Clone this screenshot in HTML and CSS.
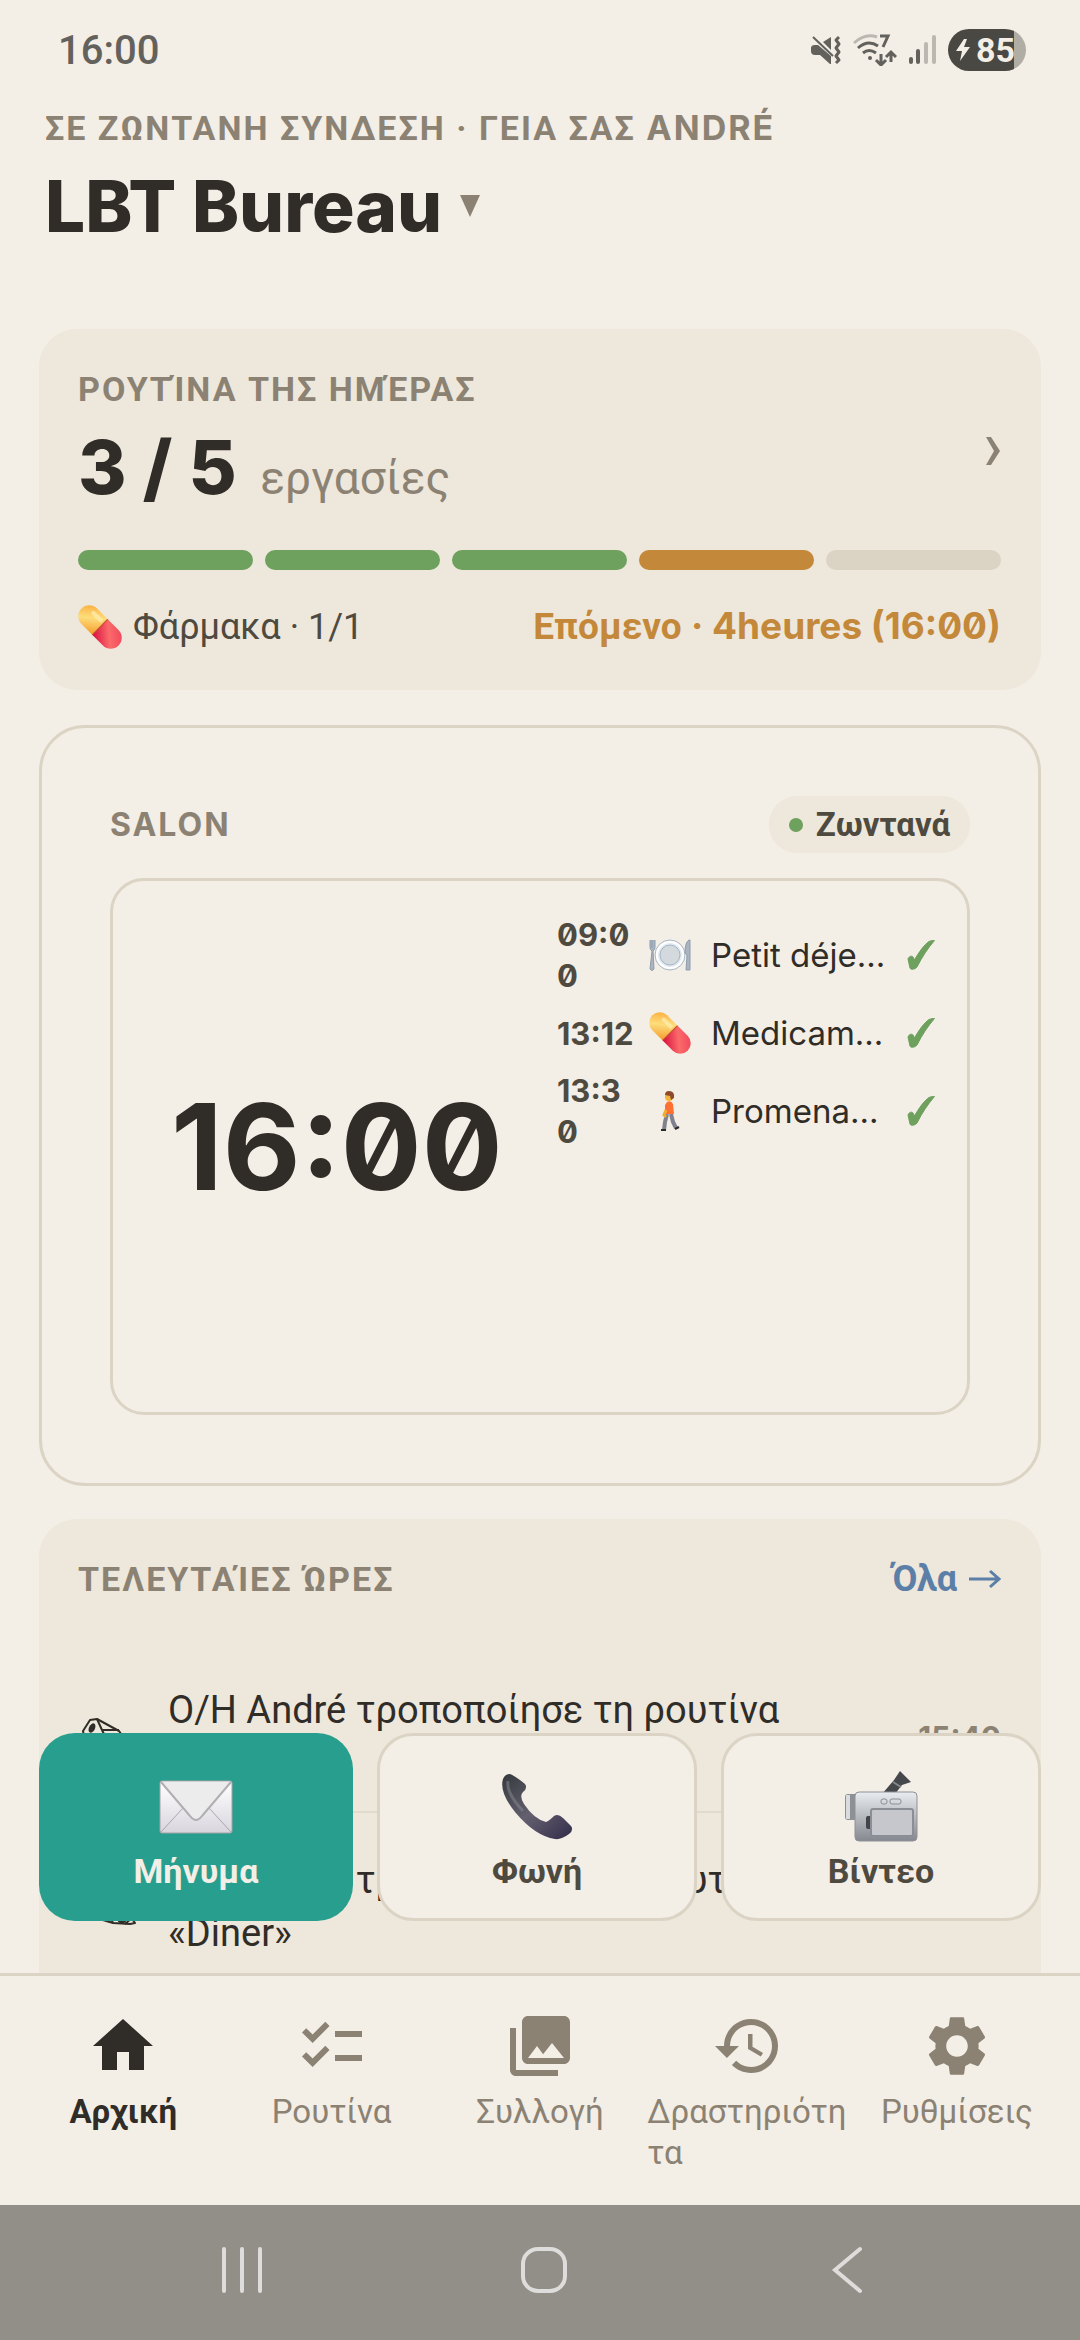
FILE: index.html
```html
<!DOCTYPE html>
<html lang="el">
<head>
    <meta charset="UTF-8">
    <meta name="viewport" content="width=device-width, initial-scale=1.0">
    <title>LBT Bureau</title>
    <link rel="stylesheet" href="styles.css">
</head>
<body>

    <!-- Shared drawings -->
    <svg class="sprite" aria-hidden="true">
        <defs>
            <linearGradient id="pillTop" x1="0" y1="0" x2="1" y2="1">
                <stop offset="0" stop-color="#fba32f"/>
                <stop offset=".5" stop-color="#fddd7c"/>
                <stop offset="1" stop-color="#f59a2c"/>
            </linearGradient>
            <linearGradient id="pillBottom" x1="0" y1="1" x2="1" y2="0">
                <stop offset="0" stop-color="#d80d3c"/>
                <stop offset=".5" stop-color="#fb6a6a"/>
                <stop offset="1" stop-color="#ee3f57"/>
            </linearGradient>
            <linearGradient id="silver" x1="0" y1="0" x2="0" y2="1">
                <stop offset="0" stop-color="#e9edf0"/>
                <stop offset="1" stop-color="#85888f"/>
            </linearGradient>
            <linearGradient id="paper" x1="0" y1="0" x2="0" y2="1">
                <stop offset="0" stop-color="#ffffff"/>
                <stop offset="1" stop-color="#d9d5de"/>
            </linearGradient>
            <linearGradient id="handset" x1="0" y1="0" x2="1" y2="1">
                <stop offset="0" stop-color="#34393d"/>
                <stop offset=".5" stop-color="#64606f"/>
                <stop offset="1" stop-color="#332c4a"/>
            </linearGradient>
            <symbol id="pill" viewBox="0 0 42 42">
                <g transform="rotate(45 21 21)">
                    <path d="M21 10.500V31.500H6.500A10.500 10.500 0 0 1 6.500 10.500Z" fill="url(#pillTop)"/>
                    <path d="M21 10.500V31.500H35.500A10.500 10.500 0 0 0 35.500 10.500Z" fill="url(#pillBottom)"/>
                    <path d="M21 10.500V31.500" stroke="#c4502b" stroke-width="1"/>
                    <path d="M7 16H17" stroke="#ffeeb0" stroke-width="4" stroke-linecap="round" opacity=".7"/>
                </g>
            </symbol>
            <symbol id="check" viewBox="0 0 28 30">
                <path d="M1 19C2 16 5 15.500 6 17L7.500 20C12 12 17 5 22 1.500C24 .5 26 .5 27.500 .5C21 8 15 17 10 27C8 29.500 3.500 30 3 28Z" fill="#6ea05e" stroke="#6ea05e"/>
            </symbol>
            <symbol id="note" viewBox="0 0 54 38">
                <path d="M1 13L8 2L15 1L37 13L53 35L48 36L31 35L4 27Z" fill="none" stroke="#302c27" stroke-width="2" stroke-linejoin="round"/>
                <path d="M15 1L20 12L31 35M20 12H37M43 36L50 30" fill="none" stroke="#302c27" stroke-width="2"/>
                <ellipse cx="10" cy="10" rx="3" ry="5" transform="rotate(25 10 10)" fill="#302c27"/>
                <ellipse cx="40" cy="33" rx="4" ry="2" fill="#302c27"/>
            </symbol>
        </defs>
    </svg>

    <div class="status-bar">
        <span class="clock">16:00</span>
        <div class="status-icons">
            <svg width="30" height="30" viewBox="0 0 30 30">
                <path d="M4 10H7L20 21V29H19L9 20H4Q0 20 0 16V13Q0 10 4 10ZM20 2V15L12 7Z" fill="#63615c"/>
                <path d="M2 2L22 21" stroke="#63615c" stroke-width="2"/>
                <path d="M28 2L25 5L28 9L25 13L28 17L25 21L28 25L25 28" fill="none" stroke="#63615c" stroke-width="3" stroke-linejoin="round"/>
            </svg>
            <svg width="44" height="32" viewBox="0 0 44 32">
                <g fill="none" stroke="#63615c" stroke-width="3">
                    <path d="M1 9Q12 -1 24 3" stroke="#bcb8b1"/>
                    <path d="M5 14Q15 5 25 12M10 19Q16 14 23 19"/>
                    <path d="M27 2H35L30 13"/>
                    <path d="M28 20V30M23 26L28 31L33 26M38 28V18M33 23L38 18L43 23"/>
                </g>
                <circle cx="17" cy="24" r="2" fill="#63615c"/>
            </svg>
            <svg width="27" height="30" viewBox="0 0 27 30">
                <path d="M2 24V27M9 16V27" stroke="#63615c" stroke-width="4" stroke-linecap="round"/>
                <path d="M17 9V27M25 2V27" stroke="#bcb8b1" stroke-width="4" stroke-linecap="round"/>
            </svg>
            <div class="battery">
                <svg width="14" height="22" viewBox="0 0 14 22"><path d="M8 0L0 12H6L4 22L14 8H8L11 0Z" fill="#f3eee6"/></svg>
                <span>85</span>
            </div>
        </div>
    </div>

    <main class="content">
        <header class="page-header">
            <p class="overline">ΣΕ ΖΩΝΤΑΝΗ ΣΥΝΔΕΣΗ · ΓΕΙΑ ΣΑΣ <span class="latin">ANDRÉ</span></p>
            <button class="home-picker">LBT Bureau
                <svg width="20" height="22" viewBox="0 0 20 22"><path d="M0 0H20L10 22Z" fill="#8b8273"/></svg>
            </button>
        </header>

        <section class="card routine">
            <div class="routine-top">
                <div>
                    <h2 class="overline">ΡΟΥΤΊΝΑ ΤΗΣ ΗΜΈΡΑΣ</h2>
                    <p class="count"><strong>3 / 5</strong> <span>εργασίες</span></p>
                </div>
                <svg class="chevron" width="16" height="28" viewBox="0 0 16 28"><path d="M1 0H6L15 14L6 28H1L9 14Z" fill="#8b8273"/></svg>
            </div>
            <div class="progress">
                <span class="done"></span>
                <span class="done"></span>
                <span class="done"></span>
                <span class="next"></span>
                <span></span>
            </div>
            <div class="routine-foot">
                <p class="meds"><svg width="44" height="44"><use href="#pill"/></svg>Φάρμακα · 1/1</p>
                <p class="upcoming">Επόμενο <span class="latin">· 4heures (16:00)</span></p>
            </div>
        </section>

        <section class="card room">
            <div class="room-head">
                <h2 class="overline latin">SALON</h2>
                <span class="live">Ζωντανά</span>
            </div>
            <div class="screen">
                <div class="big-clock">16:00</div>
                <ul class="tasks">
                    <li>
                        <span class="time">09:00</span>
                        <svg width="42" height="42" viewBox="0 0 42 42">
                            <circle cx="21" cy="21" r="15" fill="#e4eaf1" stroke="#aeb9c6"/>
                            <circle cx="21" cy="21" r="10" fill="#d3d9dd" stroke="#a6b4c4"/>
                            <circle cx="21" cy="21" r="13" fill="none" stroke="#ffffff" stroke-width="2"/>
                            <path d="M1 6V13Q1 16 3 17L1 35Q3 38 5 35L4 17Q6 16 6 13V6M3 6V14" fill="#a9b4c0" stroke="#8f9dad"/>
                            <path d="M40 6Q36 8 36 19L38 21L37 36H41V6Z" fill="#a9b4c0" stroke="#8f9dad"/>
                        </svg>
                        <span class="name">Petit déjeuner</span>
                        <svg width="28" height="30"><use href="#check"/></svg>
                    </li>
                    <li>
                        <span class="time">13:12</span>
                        <svg width="42" height="42"><use href="#pill"/></svg>
                        <span class="name">Medicaments</span>
                        <svg width="28" height="30"><use href="#check"/></svg>
                    </li>
                    <li>
                        <span class="time">13:30</span>
                        <svg width="42" height="42" viewBox="0 0 42 42">
                            <path d="M18 24L16 32L15 40M22 24L24 32L27 38" fill="none" stroke="#80818f" stroke-width="4"/>
                            <path d="M12 40H17M26 39L30 37" stroke="#292929" stroke-width="2"/>
                            <path d="M18 12Q22 10 24 14L25 24H16V15Z" fill="#ff7132"/>
                            <path d="M17 20L15 25L17 27" fill="none" stroke="#f3ad2c" stroke-width="3"/>
                            <circle cx="20" cy="7" r="4" fill="#f5b53a"/>
                            <path d="M16 5Q16 1 20 1Q26 1 25 8L22 10L21 6Z" fill="#8d4b2b"/>
                        </svg>
                        <span class="name">Promenade du soir</span>
                        <svg width="28" height="30"><use href="#check"/></svg>
                    </li>
                </ul>
            </div>
        </section>

        <section class="card activity">
            <div class="activity-head">
                <h2 class="overline">ΤΕΛΕΥΤΑΊΕΣ ΏΡΕΣ</h2>
                <a href="#">Όλα <svg width="32" height="20" viewBox="0 0 32 20"><path d="M0 10H29M21 2L30 10L21 18" fill="none" stroke="#5c7fa8" stroke-width="3"/></svg></a>
            </div>
            <ul class="events">
                <li>
                    <svg width="54" height="38"><use href="#note"/></svg>
                    <p>Ο/Η André τροποποίησε τη ρουτίνα «4heures»</p>
                    <time>15:40</time>
                </li>
                <li>
                    <svg width="54" height="38"><use href="#note"/></svg>
                    <p>Ο/Η André τροποποίησε τη ρουτίνα «Diner»</p>
                    <time>15:40</time>
                </li>
            </ul>
        </section>

        <div class="quick-actions">
            <button class="action primary">
                <svg width="74" height="74" viewBox="0 0 74 74">
                    <rect x="1" y="11" width="72" height="52" rx="2" fill="url(#paper)" stroke="#a5a0a6"/>
                    <path d="M2 62L24 38M72 62L50 38" stroke="#aaa6ad"/>
                    <path d="M2 12L31 46Q37 54 43 46L72 12" fill="#ececed" stroke="#b2afb4" stroke-width="2"/>
                </svg>
                Μήνυμα
            </button>
            <button class="action">
                <svg width="74" height="74" viewBox="0 0 74 74">
                    <path d="M3 9Q5 4 10 4Q14 5 25 14Q28 18 23 22Q19 26 24 34Q34 49 46 52Q49 51 54 46Q58 43 63 48L71 56Q74 60 69 64Q61 70 55 69Q35 66 15 42Q-1 22 3 9Z" fill="url(#handset)"/>
                    <path d="M8 11Q6 23 23 41" fill="none" stroke="#8a8992" stroke-width="3" opacity=".5"/>
                </svg>
                Φωνή
            </button>
            <button class="action">
                <svg width="74" height="74" viewBox="0 0 74 74">
                    <path d="M38 24L50 10L56 1L67 12L58 15L51 24Z" fill="#45484b"/>
                    <path d="M49 12L57 17" stroke="#86898c" stroke-width="2"/>
                    <rect x="1" y="24" width="13" height="26" rx="3" fill="#8d9095"/>
                    <rect x="2" y="25" width="4" height="24" fill="#d9dcdf"/>
                    <rect x="11" y="22" width="62" height="49" rx="4" fill="url(#silver)" stroke="#8e9298"/>
                    <rect x="22" y="46" width="6" height="13" rx="2" fill="#41444b"/>
                    <rect x="27" y="39" width="42" height="27" rx="2" fill="#c5c7cc" stroke="#8b8e95" stroke-width="2"/>
                    <rect x="37" y="29" width="6" height="5" rx="2" fill="none" stroke="#8b8e95"/>
                    <rect x="46" y="29" width="11" height="5" rx="2" fill="none" stroke="#8b8e95"/>
                </svg>
                Βίντεο
            </button>
        </div>
    </main>

    <nav class="tab-bar">
        <a href="#" class="tab active">
            <svg viewBox="0 0 24 24"><path d="M10 20v-6h4v6h5v-8h3L12 3 2 12h3v8z"/></svg>
            <span>Αρχική</span>
        </a>
        <a href="#" class="tab">
            <svg viewBox="0 0 24 24"><path d="M22 7h-9v2h9V7zm0 8h-9v2h9v-2zM5.540 11L2 7.460l1.410-1.410 2.120 2.120 4.240-4.240 1.410 1.410L5.540 11zm0 8L2 15.460l1.410-1.410 2.120 2.120 4.240-4.240 1.410 1.410L5.540 19z"/></svg>
            <span>Ρουτίνα</span>
        </a>
        <a href="#" class="tab">
            <svg viewBox="0 0 24 24"><path d="M22 16V4c0-1.100-.9-2-2-2H8c-1.100 0-2 .9-2 2v12c0 1.100.9 2 2 2h12c1.100 0 2-.9 2-2zm-11-4l2.030 2.710L16 11l4 5H8l3-4zM2 6v14c0 1.100.9 2 2 2h14v-2H4V6H2z"/></svg>
            <span>Συλλογή</span>
        </a>
        <a href="#" class="tab">
            <svg viewBox="0 0 24 24"><path d="M13 3c-4.970 0-9 4.030-9 9H1l3.890 3.890.07.14L9 12H6c0-3.870 3.130-7 7-7s7 3.130 7 7-3.130 7-7 7c-1.930 0-3.680-.79-4.940-2.060l-1.420 1.420C8.270 19.990 10.510 21 13 21c4.970 0 9-4.030 9-9s-4.030-9-9-9zm-1 5v5l4.280 2.540.72-1.210-3.500-2.080V8H12z"/></svg>
            <span>Δραστηριότητα</span>
        </a>
        <a href="#" class="tab">
            <svg viewBox="0 0 24 24"><path d="M19.140 12.940c.04-.3.06-.61.06-.94 0-.32-.02-.64-.07-.94l2.030-1.580c.18-.14.23-.41.12-.61l-1.920-3.320c-.12-.22-.37-.29-.59-.22l-2.390.96c-.5-.38-1.030-.7-1.620-.94l-.36-2.540c-.04-.24-.24-.41-.48-.41h-3.840c-.24 0-.43.17-.47.41l-.36 2.540c-.59.24-1.130.57-1.620.94l-2.390-.96c-.22-.08-.47 0-.59.22L2.740 8.870c-.12.21-.08.47.12.61l2.030 1.580c-.05.3-.09.63-.09.94s.02.64.07.94l-2.030 1.580c-.18.14-.23.41-.12.61l1.920 3.320c.12.22.37.29.59.22l2.390-.96c.5.38 1.030.7 1.620.94l.36 2.540c.05.24.24.41.48.41h3.840c.24 0 .44-.17.47-.41l.36-2.540c.59-.24 1.130-.56 1.620-.94l2.390.96c.22.08.47 0 .59-.22l1.920-3.320c.12-.22.07-.47-.12-.61l-2.010-1.580zM12 15.600c-1.980 0-3.600-1.620-3.600-3.600s1.620-3.600 3.600-3.600 3.600 1.620 3.600 3.600-1.620 3.600-3.600 3.600z"/></svg>
            <span>Ρυθμίσεις</span>
        </a>
    </nav>

    <div class="system-bar">
        <button aria-label="Recents"><svg width="48" height="48" viewBox="0 0 48 48"><path d="M5 3V45M23 3V45M41 3V45"/></svg></button>
        <button aria-label="Home"><svg width="48" height="48" viewBox="0 0 48 48"><rect x="3" y="3" width="42" height="42" rx="15"/></svg></button>
        <button aria-label="Back"><svg width="48" height="48" viewBox="0 0 48 48"><path d="M39 3L14 24L39 45"/></svg></button>
    </div>

</body>
</html>
```
FILE: styles.css
```css
/* --- Base and Theme Setup --- */
:root {
    --bg: #f3eee6;
    --card: #eee7db;
    --line: #dbd4c5;
    --ink: #302c27;
    --ink-soft: #4f4a3f;
    --muted: #8b8273;
    --green: #6ea05e;
    --amber: #c38839;
    --blue: #5c7fa8;
    --teal: #289f8e;
}

* {
    box-sizing: border-box;
}

body {
    margin: 0;
    height: 100vh;
    display: flex;
    flex-direction: column;
    overflow: hidden;
    background: var(--bg);
    color: var(--ink);
    font-family: Roboto, "Noto Sans", sans-serif;
    font-size: 36px;
}

h2, p, ul {
    margin: 0;
    padding: 0;
    font-weight: 400;
}

ul {
    list-style: none;
}

button {
    border: none;
    background: none;
    padding: 0;
    font: inherit;
    color: inherit;
}

a {
    color: inherit;
    text-decoration: none;
}

svg {
    flex: none;
}

.sprite {
    position: absolute;
    width: 0;
    height: 0;
}

.latin {
    font-family: Inter, "Open Sans", sans-serif;
    font-feature-settings: "zero";
}

.overline {
    font-size: 34px;
    line-height: 44px;
    font-weight: 700;
    letter-spacing: 2px;
    color: var(--muted);
}

/* --- Status Bar --- */
.status-bar {
    display: flex;
    justify-content: space-between;
    align-items: center;
    height: 100px;
    padding: 0 54px 0 58px;
}

.clock {
    font-size: 40px;
    font-weight: 500;
    color: #63615c;
}

.status-icons {
    display: flex;
    align-items: center;
    gap: 12px;
}

.battery {
    display: flex;
    align-items: center;
    gap: 6px;
    width: 78px;
    height: 42px;
    padding-left: 8px;
    border-radius: 21px;
    background: linear-gradient(90deg, #494842 66px, #b0ada5 66px);
    color: var(--bg);
    font-size: 34px;
    font-weight: 700;
}

/* --- Content --- */
.content {
    position: relative;
    flex: 1;
    min-height: 0;
    overflow: hidden;
    padding: 0 39px;
}

.page-header {
    padding: 6px 6px 0;
    height: 229px;
}

.home-picker {
    display: flex;
    align-items: center;
    gap: 18px;
    margin-top: 8px;
    font-family: Inter, sans-serif;
    font-size: 71px;
    line-height: 96px;
    font-weight: 800;
}

.card {
    border-radius: 38px;
    background: var(--card);
    padding: 38px 40px 38px 39px;
}

/* --- Routine --- */
.routine {
    height: 361px;
}

.routine-top {
    display: flex;
    justify-content: space-between;
}

.chevron {
    margin-top: 70px;
}

.count {
    margin-top: 14px;
    line-height: 84px;
    font-size: 46px;
    color: var(--muted);
}

.count strong {
    margin-right: 12px;
    font-family: Inter, sans-serif;
    font-size: 74px;
    font-weight: 800;
    color: var(--ink);
}

.progress {
    display: flex;
    gap: 12px;
    margin-top: 30px;
}

.progress span {
    flex: 1;
    height: 20px;
    border-radius: 10px;
    background: var(--line);
}

.progress .done {
    background: var(--green);
}

.progress .next {
    background: var(--amber);
}

.routine-foot {
    display: flex;
    justify-content: space-between;
    align-items: center;
    margin-top: 32px;
    line-height: 48px;
}

.meds {
    display: flex;
    align-items: center;
    gap: 11px;
    color: var(--ink-soft);
}

.upcoming {
    font-size: 37px;
    font-weight: 700;
    color: var(--amber);
}

/* --- Room --- */
.room {
    height: 761px;
    margin-top: 35px;
    padding: 68px;
    border: 3px solid var(--line);
    border-radius: 46px;
    background: var(--bg);
}

.room-head {
    display: flex;
    justify-content: space-between;
    align-items: center;
}

.room-head .overline {
    font-size: 32px;
}

.live {
    display: flex;
    align-items: center;
    gap: 13px;
    height: 57px;
    padding: 0 20px;
    border-radius: 28px;
    background: var(--card);
    color: var(--ink-soft);
    font-size: 33px;
    font-weight: 700;
}

.live::before {
    content: "";
    width: 14px;
    height: 14px;
    border-radius: 50%;
    background: var(--green);
}

.screen {
    display: flex;
    height: 537px;
    margin-top: 25px;
    padding: 33px 32px 33px 58px;
    border: 3px solid var(--line);
    border-radius: 34px;
}

.big-clock {
    flex: 1;
    align-self: center;
    font-family: Inter, sans-serif;
    font-feature-settings: "zero";
    font-size: 120px;
    font-weight: 700;
}

.tasks {
    display: flex;
    flex-direction: column;
    gap: 12px;
    width: 378px;
    font-family: Inter, sans-serif;
}

.tasks li {
    display: flex;
    align-items: center;
    min-height: 50px;
}

.time {
    width: 78px;
    margin-right: 14px;
    font-size: 31px;
    line-height: 41px;
    font-weight: 700;
    font-feature-settings: "zero";
    color: var(--ink-soft);
    word-break: break-all;
}

.name {
    flex: 1;
    margin: 0 14px 0 20px;
    overflow: hidden;
    white-space: nowrap;
    text-overflow: ellipsis;
    font-size: 33px;
    line-height: 48px;
}

/* --- Activity --- */
.activity {
    height: 560px;
    margin-top: 33px;
}

.activity-head {
    display: flex;
    justify-content: space-between;
    align-items: center;
}

.activity-head a {
    display: flex;
    align-items: center;
    gap: 12px;
    color: var(--blue);
    font-weight: 700;
}

.events {
    margin-top: 42px;
}

.events li {
    display: flex;
    align-items: center;
    height: 170px;
    padding: 20px 0 0 4px;
    border-bottom: 2px solid #e2dacd;
}

.events p {
    flex: 1;
    margin: 0 100px 0 32px;
    font-size: 38px;
    line-height: 53px;
}

.events time {
    font-family: Inter, sans-serif;
    font-size: 30px;
    font-weight: 700;
    color: var(--muted);
}

/* --- Quick Actions, float over the feed --- */
.quick-actions {
    position: absolute;
    left: 39px;
    right: 39px;
    bottom: 52px;
    display: flex;
    gap: 24px;
}

.action {
    flex: 1;
    display: flex;
    flex-direction: column;
    align-items: center;
    gap: 5px;
    height: 188px;
    padding-top: 34px;
    border: 3px solid var(--line);
    border-radius: 36px;
    background: var(--bg);
    color: var(--ink-soft);
    font-size: 34px;
    line-height: 44px;
    font-weight: 700;
}

.action.primary {
    padding-top: 37px;
    border: none;
    background: var(--teal);
    color: var(--bg);
}

/* --- Tab Bar --- */
.tab-bar {
    display: flex;
    height: 232px;
    padding: 34px 19px 0;
    border-top: 3px solid var(--line);
}

.tab {
    flex: 1;
    min-width: 0;
    display: flex;
    flex-direction: column;
    align-items: center;
    gap: 9px;
    padding: 0 3px;
    color: var(--muted);
    font-size: 33px;
    line-height: 41px;
}

.tab span {
    word-break: break-all;
}

.tab svg {
    width: 72px;
    height: 72px;
    fill: currentColor;
}

.tab.active {
    color: var(--ink);
    font-weight: 700;
}

/* --- System Bar --- */
.system-bar {
    display: flex;
    justify-content: space-around;
    align-items: center;
    height: 135px;
    padding: 0 84px 6px 92px;
    background: #928e88;
}

.system-bar svg {
    display: block;
    fill: none;
    stroke: #dedddb;
    stroke-width: 4;
    stroke-linecap: round;
}
```
